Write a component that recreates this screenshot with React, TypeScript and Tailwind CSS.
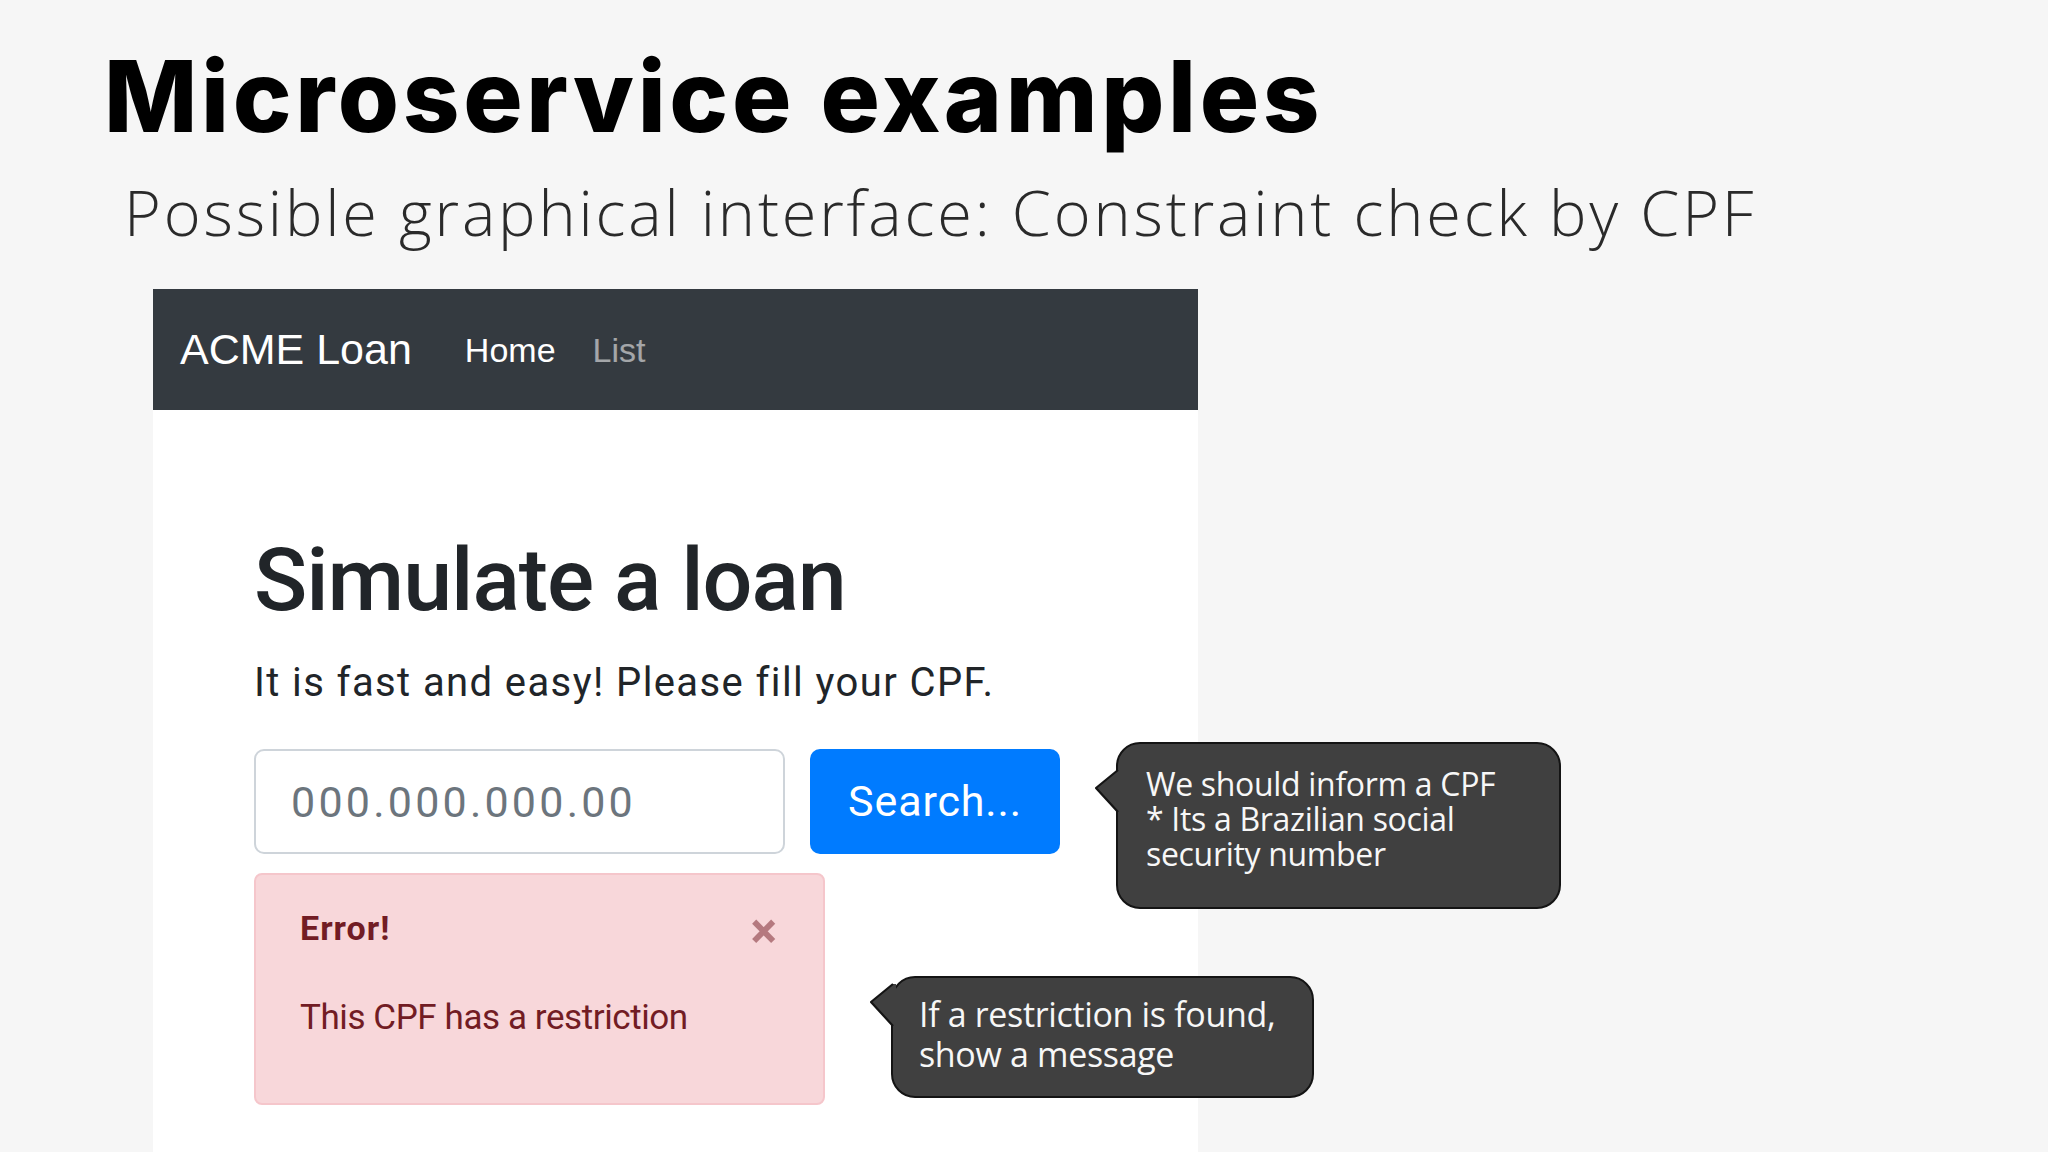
import React from "react";

function Tail({ className }: { className?: string }) {
  return (
    <svg
      className={className}
      width="26"
      height="56"
      viewBox="0 0 26 56"
      fill="none"
    >
      <path d="M23 8 Q12 17 1 26 Q12 38 23 50 L26 50 L26 8 Z" fill="#404040" />
      <path
        d="M23 8 Q12 17 1 26 Q12 38 23 50"
        stroke="#141414"
        strokeWidth="2.2"
        strokeLinejoin="round"
        fill="none"
      />
    </svg>
  );
}

export default function App() {
  return (
    <div className="relative w-[2048px] h-[1152px] overflow-hidden bg-[#f6f6f6]">
      <h1 className="w-fit pt-[47px] pl-[104px] text-[99px] leading-none font-extrabold text-black tracking-[0.037em] font-['Inter',sans-serif]">
        Microservice examples
      </h1>
      <p className="w-fit mt-[34px] pl-[124px] text-[63px] leading-none font-light text-[#2a2a2a] tracking-[0.045em] font-['Open_Sans',sans-serif]">
        Possible graphical interface: Constraint check by CPF
      </p>

      <div className="mt-[46px] ml-[153px] w-[1045px] flex flex-col">
        <nav className="h-[121px] bg-[#343a40] flex items-center pl-[27px] font-['Liberation_Sans',Arial,sans-serif]">
          <span className="text-[43px] leading-none text-white">ACME Loan</span>
          <span className="ml-[53px] text-[34px] leading-none text-white">Home</span>
          <span className="ml-[37px] text-[34px] leading-none text-white/55">List</span>
        </nav>
        <div className="bg-white h-[742px] pl-[101px] pt-[126px] font-['Roboto',sans-serif] text-[#212529]">
          <h2 className="w-fit text-[88px] leading-none font-medium tracking-[-0.012em]">Simulate a loan</h2>
          <p className="w-fit mt-[39px] text-[40px] leading-none tracking-[0.035em]">
            It is fast and easy! Please fill your CPF.
          </p>
          <div className="mt-[46px] flex gap-[25px]">
            <input
              className="w-[531px] h-[105px] rounded-[10px] border-2 border-[#ced4da] bg-white pl-[35px] text-[43px] tracking-[0.075em] outline-none placeholder:text-[#6c757d]"
              placeholder="000.000.000.00"
            />
            <button className="w-[250px] h-[105px] rounded-[10px] bg-[#007bff] text-white text-[43px] leading-none tracking-[0.02em]">
              Search...
            </button>
          </div>
          <div className="mt-[19px] w-[571px] h-[232px] rounded-[8px] border-2 border-[#f5c6cb] bg-[#f8d7da] text-[#721c24] pl-[44px] pt-[36px] pr-[46px]">
            <div className="flex items-start justify-between">
              <span className="text-[34px] leading-none font-bold tracking-[0.03em]">Error!</span>
              <span className="text-[50px] leading-none font-bold text-[#721c24]/50 -mt-[5px]">×</span>
            </div>
            <p className="w-fit mt-[44px] text-[35px] leading-none tracking-[-0.012em]">This CPF has a restriction</p>
          </div>
        </div>
      </div>

      {/* Callout 1 */}
      <div className="absolute left-[1116px] top-[742px] w-[445px] h-[167px] rounded-[24px] border-2 border-[#141414] bg-[#404040] pl-[28px] pt-[22px] text-[32px] leading-[35px] text-[#f7f7f7] font-['Open_Sans',sans-serif] tracking-[-0.01em]">
        <Tail className="absolute left-[-23px] top-[18px]" />
        <div>We should inform a CPF</div>
        <div>* Its a Brazilian social</div>
        <div>security number</div>
      </div>

      {/* Callout 2 */}
      <div className="absolute left-[891px] top-[976px] w-[423px] h-[122px] rounded-[24px] border-2 border-[#141414] bg-[#404040] pl-[26px] pt-[16px] text-[34px] leading-[40px] text-[#f7f7f7] font-['Open_Sans',sans-serif] tracking-[-0.01em]">
        <Tail className="absolute left-[-23px] top-[-2px]" />
        <div>If a restriction is found,</div>
        <div>show a message</div>
      </div>
    </div>
  );
}
